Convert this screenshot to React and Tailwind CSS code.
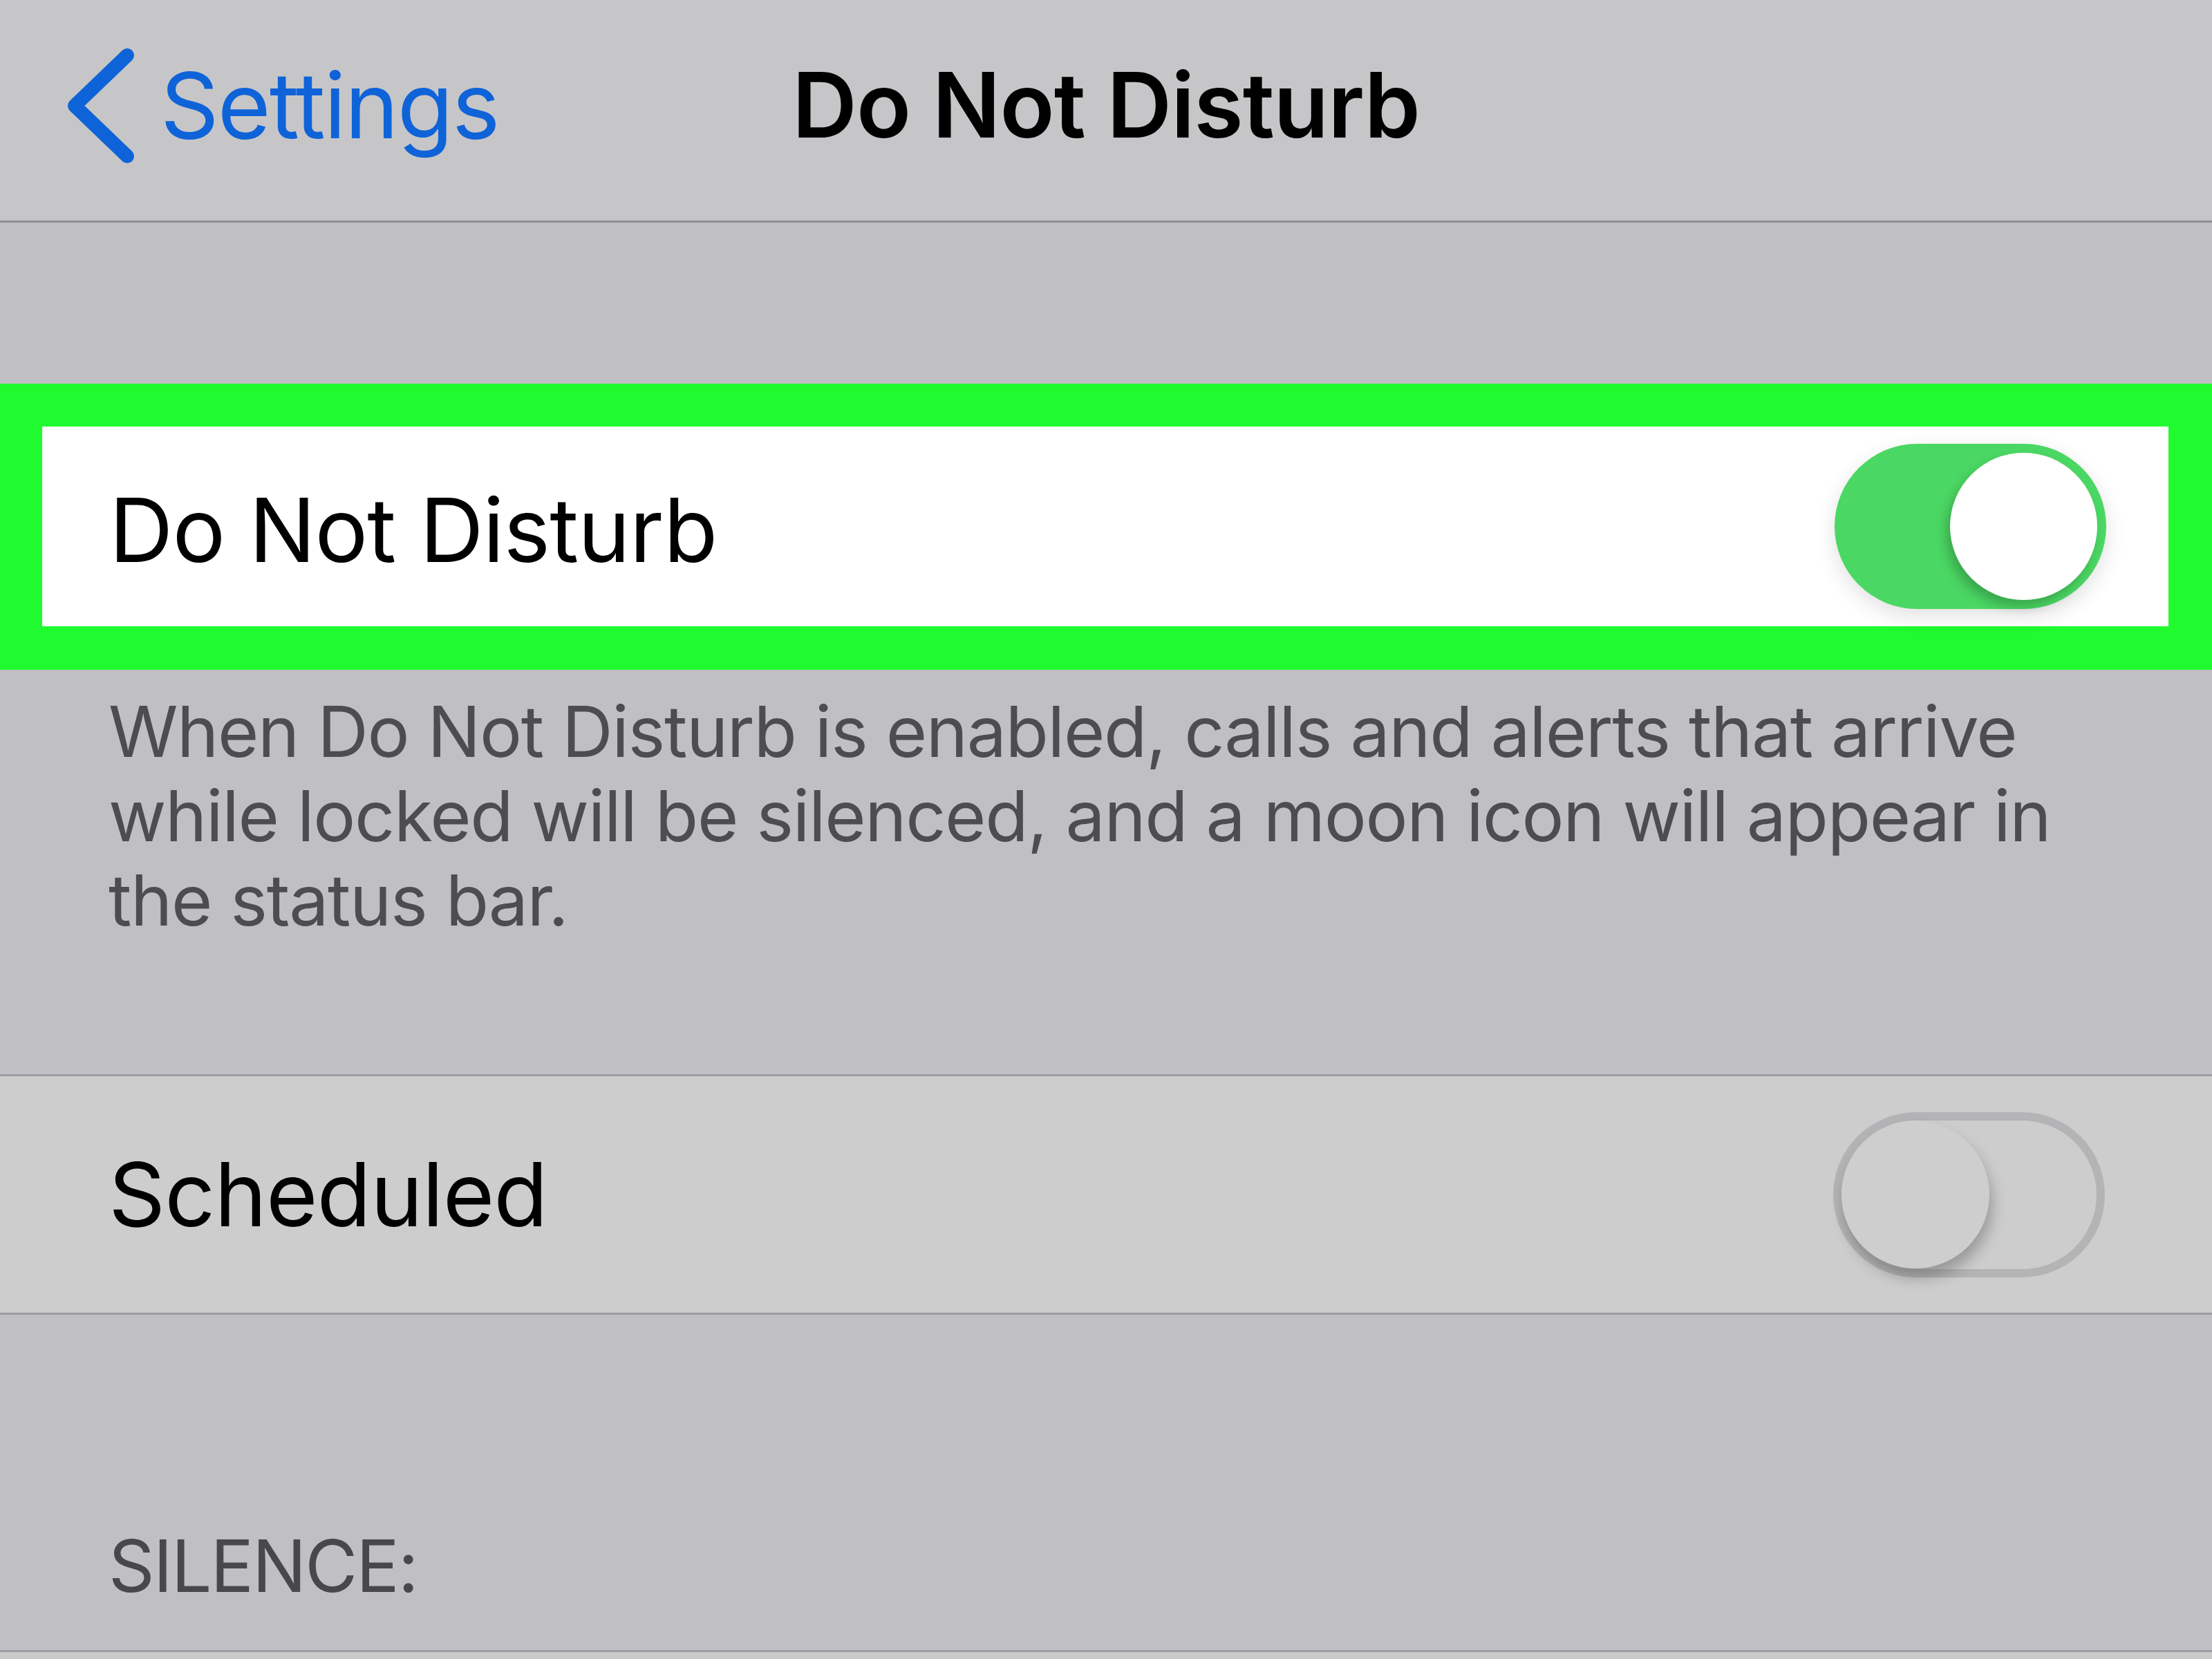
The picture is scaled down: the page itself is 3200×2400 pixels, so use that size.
import React from "react";

// iOS "Do Not Disturb" settings page, rendered at 3200px wide
const font = { fontFamily: "Inter, 'Noto Sans', sans-serif" };

const Toggle = ({ on }) => {
  if (on) {
    return (
      <div className="relative w-[393px] h-[239px] rounded-full bg-[#4bd763] shadow-[0_10px_30px_rgba(0,0,0,0.12)]">
        <div className="absolute right-[13px] top-[13px] w-[213px] h-[213px] rounded-full bg-white shadow-[-6px_10px_16px_rgba(0,0,0,0.22)]" />
      </div>
    );
  }
  return (
    <div className="relative w-[393px] h-[239px] rounded-full border-[12px] border-[#b4b4b6] bg-[#cdcdcd]">
      <div className="absolute left-0 top-0 w-[214px] h-[214px] rounded-full bg-[#cecece] shadow-[4px_14px_20px_rgba(0,0,0,0.25)]" />
    </div>
  );
};

export default function App() {
  return (
    <div className="w-[3200px] h-[2400px] overflow-hidden bg-[#c0bfc4] flex flex-col" style={font}>
      {/* Nav bar */}
      <div className="h-[322px] shrink-0 bg-[#c6c6c8] border-b-[3px] border-[#8f8f93] grid grid-cols-[1fr_auto_1fr] items-center pb-[16px]">
        <div className="flex items-center pl-[96px]">
          <svg width="100" height="166" viewBox="0 0 100 166" className="mt-[2px]">
            <path d="M88 10 L12 83 L88 156" fill="none" stroke="#0f63d8" strokeWidth="20" strokeLinecap="round" strokeLinejoin="round" />
          </svg>
          <span className="ml-[36px] text-[132px] leading-none text-[#0f63d8] tracking-[-2px]">Settings</span>
        </div>
        <div className="text-[130px] leading-none font-semibold text-black tracking-[-1px]">Do Not Disturb</div>
        <div />
      </div>

      <div className="h-[233px] shrink-0" />

      {/* Highlighted row */}
      <div className="shrink-0 bg-[#1ffb2e] pt-[62px] pb-[63px] pl-[61px] pr-[63px]">
        <div className="h-[289px] bg-white flex items-center justify-between pl-[97px] pr-[90px]">
          <span className="text-[128px] leading-none text-black tracking-[-1px] mt-[10px]">Do Not Disturb</span>
          <Toggle on />
        </div>
      </div>

      {/* Description */}
      <div className="shrink-0 pl-[157px] pt-[28px] text-[102px] leading-[122px] text-[#4c4c51] tracking-[-1.4px]">
        When Do Not Disturb is enabled, calls and alerts that arrive
        <br />
        while locked will be silenced, and a moon icon will appear in
        <br />
        the status bar.
      </div>

      <div className="h-[191px] shrink-0" />

      {/* Scheduled row */}
      <div className="h-[348px] shrink-0 bg-[#cdcdcd] border-y-[3px] border-[#9d9da1] flex items-center justify-between pl-[157px] pr-[155px]">
        <span className="text-[128px] leading-none text-black tracking-[-1px]">Scheduled</span>
        <Toggle on={false} />
      </div>

      {/* Section header */}
      <div className="flex-1 min-h-0 flex flex-col justify-end">
        <div className="pl-[157px] pb-[70px] text-[104px] leading-none text-[#48484c] tracking-[-2px]">SILENCE:</div>
        <div className="h-[13px] border-t-[3px] border-[#9d9da1] bg-[#cacaca]" />
      </div>
    </div>
  );
}
